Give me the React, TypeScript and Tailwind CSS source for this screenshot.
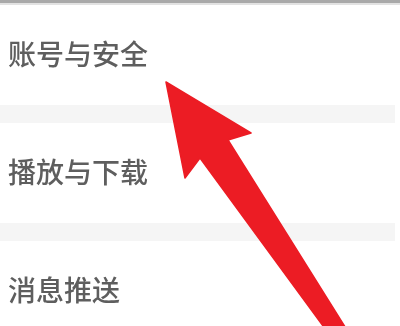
const items = ['账号与安全', '播放与下载', '消息推送']

function Arrow() {
  return (
    <svg
      className="pointer-events-none absolute left-0 top-0"
      width={400}
      height={326}
      viewBox="0 0 400 326"
    >
      <polygon
        points="166,82 251,133 228,140 347,330 326,330 200,158 185,178"
        fill="#ec1c24"
        stroke="#ec1c24"
        strokeWidth={1.5}
        strokeLinejoin="round"
      />
    </svg>
  )
}

export default function App() {
  return (
    <div className="relative h-[326px] w-[400px] overflow-hidden bg-white font-['Noto_Sans_CJK_SC',sans-serif]">
      <div className="h-[3px] bg-[#a9a9a9]" />
      <div className="h-[2px] bg-[#e2e2e2]" />
      <div className="flex flex-col pr-[5px]">
        {items.map((label, i) => (
          <div key={label} className="flex flex-col">
            {i > 0 && <div className="h-[18px] bg-[#f5f5f5]" />}
            <div className="flex h-[100px] items-center pl-[8px] pb-[4px]">
              <span className="text-[28px] font-medium leading-none text-[#5e5e5e] blur-[0.5px]">
                {label}
              </span>
            </div>
          </div>
        ))}
      </div>
      <Arrow />
    </div>
  )
}
